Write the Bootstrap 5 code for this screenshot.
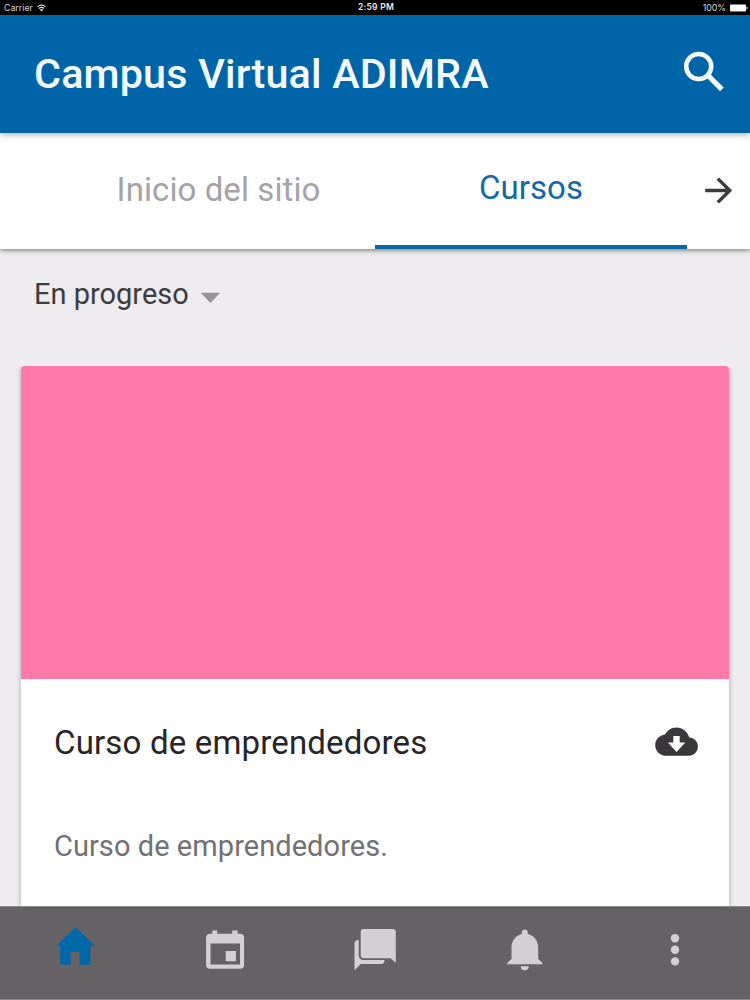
<!DOCTYPE html>
<html lang="es">
<head>
<meta charset="utf-8">
<meta name="viewport" content="width=device-width, initial-scale=1">
<title>Campus Virtual ADIMRA</title>
<link rel="stylesheet" href="https://cdn.jsdelivr.net/npm/bootstrap@5.3.0/dist/css/bootstrap.min.css">
<style>
body{font-family:Roboto,sans-serif;background:#eeecee;color:#3d3c3f}
svg{display:block;flex:none}
.app-screen{height:1000px}
.status-bar{height:15px;background:#000;color:#d8d8d8;font:8.8px/15px Inter,sans-serif;padding:0 2px 0 4px}
.status-time{font-weight:600;font-size:8.5px;letter-spacing:.25px;color:#eee;padding-left:2px}
.app-header{height:118px;background:#0065a8;padding:0 25px 0 34px;box-shadow:0 1px 7px rgba(0,0,0,.38);z-index:3}
.app-title{font-size:41.3px;font-weight:500;line-height:48px;color:#f4fbff;letter-spacing:.18px;padding-top:11px}
.header-search{margin-top:25px}
.tab-strip{height:116px;background:#fff;box-shadow:0 1px 5px rgba(0,0,0,.55);z-index:2}
.tab-gap{width:62px}
.tab-item{width:313px;font-size:33px;line-height:40px;color:#a5a3a5;border-bottom:4px solid transparent;text-decoration:none;padding-top:37px;letter-spacing:.08px}
.tab-item.active{width:312px;padding-top:35px;color:#1468a6;border-color:#0c66a3}
.filter-row{height:117px;padding:25px 34px 0;font-size:29px;line-height:40px}
.course{margin:0 21px;border:0;border-radius:4px 4px 0 0;box-shadow:0 1px 5px rgba(0,0,0,.3);height:541px;overflow:hidden}
.course-wrap{overflow:hidden}
.course-cover{height:313px;background:#ff79a9}
.course-head{padding:44px 31px 0 33px;height:104px}
.course-name{font-size:33px;font-weight:400;line-height:40px;color:#262528;letter-spacing:.17px}
.cloud-icon{margin-top:4.5px}
.course-text{padding:43px 33px 0;font-size:29px;line-height:40px;color:#727173;letter-spacing:.06px}
.bottom-tabs{height:94px;background:#646265;border-top:1px solid #8b898c;border-bottom:1px solid #8b898c;fill:#d2d0d3;z-index:4}
.bottom-tabs a{width:150px;fill:inherit}
.bottom-tabs a.active{fill:#0067a9}
</style>
</head>
<body>
<div class="app-screen d-flex flex-column overflow-hidden">
  <div class="status-bar d-flex justify-content-between align-items-center position-relative">
    <div class="d-flex align-items-center gap-1"><span>Carrier</span>
      <svg width="9" height="8" viewBox="0 0 18 16" fill="none" stroke="#ddd" stroke-width="2.3"><path d="M1 5.5a11.5 11.5 0 0 1 16 0M4 9a7.3 7.3 0 0 1 10 0"/><path d="M9 15 5.5 11.5a5 5 0 0 1 7 0z" fill="#ddd" stroke="none"/></svg>
    </div>
    <span class="status-time position-absolute top-0 start-50 translate-middle-x">2:59 PM</span>
    <div class="d-flex align-items-center"><span class="me-1">100%</span>
      <svg width="18" height="8" viewBox="0 0 18 8" fill="#fff"><rect x="0" y=".5" width="16" height="7" rx="1"/><path d="M16.500 2.800h1v2.400h-1z"/></svg>
    </div>
  </div>
  <header class="app-header d-flex justify-content-between position-relative">
    <h1 class="app-title mb-0 mt-4">Campus Virtual ADIMRA</h1>
    <svg class="header-search" width="42" height="60" viewBox="683 39.500 42 60" fill="none" stroke="#f4fbff"><circle cx="698.700" cy="66" r="12.500" stroke-width="4.600"/><path d="m708.500 75.500 13.400 13.400" stroke-width="5.200"/></svg>
  </header>
  <nav class="tab-strip d-flex position-relative">
    <div class="tab-gap"></div>
    <a class="tab-item text-center" href="#">Inicio del sitio</a>
    <a class="tab-item active text-center" href="#">Cursos</a>
    <svg width="62" height="116" viewBox="687 133 62 116" fill="none" stroke="#3d3b3e" stroke-width="3.400"><path d="M705.200 190.500h24.500M717.800 178.600l12 11.900-12 11.900"/></svg>
  </nav>
  <div class="filter-row d-flex">
    <span>En progreso</span>
    <svg class="ms-2" width="30" height="40" viewBox="197 274 30 40"><path d="M200.700 292.700h19.400l-9.700 10.300z" fill="#97959a"/></svg>
  </div>
  <main class="flex-grow-1 course-wrap">
    <article class="card course">
      <div class="course-cover"></div>
      <div class="course-head d-flex justify-content-between">
        <h2 class="course-name mb-0">Curso de emprendedores</h2>
        <svg class="cloud-icon" width="43" height="30" viewBox="655.500 726.500 43 30"><path d="M667 755.300c-6.500 0-11.300-4.800-11.300-10.600 0-5.500 4.100-10 9.700-10.600 2.300-4.400 6.600-7.200 11.500-7.200 6.300 0 11.500 4.500 12.800 10.200 5 .3 8.700 4.200 8.700 8.900 0 5.200-4 9.300-9.200 9.300z" fill="#3a383b"/><path d="M673.800 735.500h6.400v6.500h5.600l-8.800 9.500-8.600-9.500h5.400z" fill="#fff"/></svg>
      </div>
      <p class="course-text mb-0">Curso de emprendedores.</p>
    </article>
  </main>
  <nav class="bottom-tabs d-flex position-relative">
    <a class="active" href="#" aria-label="Inicio"><svg width="150" height="92" viewBox="0 907 150 92"><path d="M70.500 964.700V952h9v12.700h10.800v-19.300H95L75.500 927.400 56.500 945.400h3.700v19.300z"/></svg></a>
    <a href="#" aria-label="Calendario"><svg width="150" height="92" viewBox="150 907 150 92"><path fill-rule="evenodd" d="M212.300 930.500h5v3.200h14.900v-3.200h5.400v3.200h2.500a4 4 0 0 1 4 4v27a4 4 0 0 1-4 4h-30a4 4 0 0 1-4-4v-27a4 4 0 0 1 4-4h2.200zM210.500 943.500v21H240v-21zM225.700 951h10.200v10.300h-10.200z"/></svg></a>
    <a href="#" aria-label="Mensajes"><svg width="150" height="92" viewBox="300 907 150 92"><path d="M364 929h28.500a3.300 3.300 0 0 1 3.300 3.300V962.700l-5.300-4.400H364a3.300 3.300 0 0 1-3.300-3.300v-22.700A3.300 3.300 0 0 1 364 929z"/><path d="M358.700 940v15.500a4.600 4.600 0 0 0 4.600 4.600H384.500c0 2.500-1 3.900-3.300 3.900H360.700l-6.200 6.200V943.300c0-2 1.500-3.300 4.200-3.300z"/></svg></a>
    <a href="#" aria-label="Notificaciones"><svg width="150" height="92" viewBox="450 907 150 92"><path d="M520.800 966.200h8a4 4 0 0 1-8 0zM524.800 929.500c1.700 0 3 1.300 3 3v1.400c6 1.400 10.400 6.800 10.400 13.200V959l4.200 4v1.300H507.300V963l4.200-4v-11.900c0-6.400 4.400-11.800 10.300-13.200v-1.400c0-1.700 1.300-3 3-3z"/></svg></a>
    <a href="#" aria-label="Más"><svg width="150" height="92" viewBox="600 907 150 92"><circle cx="675" cy="938.200" r="4.200"/><circle cx="675" cy="949.800" r="4.200"/><circle cx="675" cy="961.400" r="4.200"/></svg></a>
  </nav>
</div>
<script src="https://cdn.jsdelivr.net/npm/bootstrap@5.3.0/dist/js/bootstrap.bundle.min.js"></script>
</body>
</html>
